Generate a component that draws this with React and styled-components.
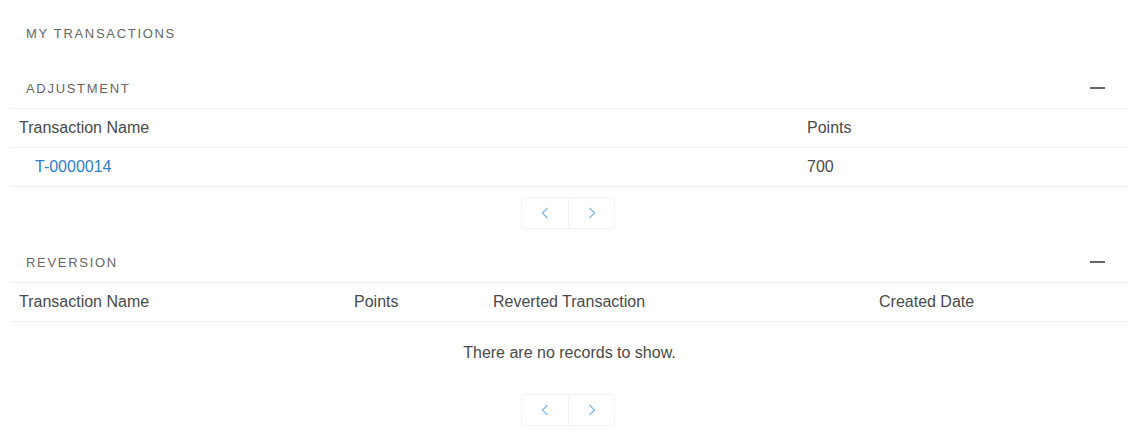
import styled, { createGlobalStyle } from "styled-components";

const GlobalStyle = createGlobalStyle`
  body {
    margin: 0;
    background: #fff;
    font-family: "Liberation Sans", Arial, sans-serif;
    color: #4a4a4a;
  }
`;

const Page = styled.div`
  padding: 0 12px 0 11px;
`;

const PageTitle = styled.div`
  padding: 24px 15px;
  line-height: 20px;
  font-size: 13px;
  letter-spacing: 1.7px;
  text-transform: uppercase;
  color: #666;
`;

const SectionHead = styled.div`
  display: flex;
  align-items: center;
  justify-content: space-between;
  height: 40px;
  padding: 0 23px 0 15px;
  margin-top: ${(p) => p.$gap || 0}px;
  border-bottom: 1px solid #f0f0f0;
`;

const SectionTitle = styled.span`
  font-size: 13px;
  letter-spacing: 1.7px;
  text-transform: uppercase;
  color: #666;
`;

const Collapse = styled.button`
  width: 15px;
  height: 12px;
  padding: 0;
  border: 0;
  background: transparent;
  display: flex;
  align-items: center;
  cursor: pointer;

  &::before {
    content: "";
    display: block;
    width: 15px;
    height: 2px;
    background: #666;
  }
`;

const Row = styled.div`
  display: grid;
  grid-template-columns: ${(p) => p.$cols};
  height: 38px;
  align-items: center;
  border-bottom: 1px solid #f0f0f0;
  font-size: 16px;
`;

const Cell = styled.div`
  padding-left: ${(p) => (p.$indent ? 24 : 8)}px;
  color: #4a4a4a;
  white-space: nowrap;
`;

const Link = styled.a`
  color: #2f80c8;
  text-decoration: none;
  cursor: pointer;
`;

const Empty = styled.div`
  height: 62px;
  display: flex;
  align-items: center;
  justify-content: center;
  font-size: 16px;
  color: #4a4a4a;
`;

const Pager = styled.div`
  display: flex;
  justify-content: center;
  margin-top: 10px;
  padding-right: 3px;
`;

const PagerGroup = styled.div`
  display: flex;
  border: 1px solid #f2f2f2;
  border-radius: 4px;
`;

const PagerBtn = styled.button`
  width: 46px;
  height: 30px;
  border: 0;
  background: transparent;
  display: flex;
  align-items: center;
  justify-content: center;
  padding: 0;
  cursor: pointer;

  & + & {
    border-left: 1px solid #f2f2f2;
  }
`;

const Chevron = ({ dir }) => (
  <svg width="8" height="12" viewBox="0 0 8 12">
    <polyline
      points={dir === "left" ? "6.5,1 1.5,6 6.5,11" : "1.5,1 6.5,6 1.5,11"}
      fill="none"
      stroke="#8dbbe4"
      strokeWidth="1.4"
    />
  </svg>
);

const Pagination = () => (
  <Pager>
    <PagerGroup>
      <PagerBtn aria-label="Previous">
        <Chevron dir="left" />
      </PagerBtn>
      <PagerBtn aria-label="Next">
        <Chevron dir="right" />
      </PagerBtn>
    </PagerGroup>
  </Pager>
);

const adjustmentCols = "788px 1fr";
const reversionCols = "335px 139px 386px 1fr";

export default function App() {
  return (
    <Page>
      <GlobalStyle />
      <PageTitle>My Transactions</PageTitle>

      <SectionHead>
        <SectionTitle>Adjustment</SectionTitle>
        <Collapse aria-label="Collapse" />
      </SectionHead>
      <Row $cols={adjustmentCols}>
        <Cell>Transaction Name</Cell>
        <Cell>Points</Cell>
      </Row>
      <Row $cols={adjustmentCols}>
        <Cell $indent>
          <Link>T-0000014</Link>
        </Cell>
        <Cell>700</Cell>
      </Row>
      <Pagination />

      <SectionHead $gap={13}>
        <SectionTitle>Reversion</SectionTitle>
        <Collapse aria-label="Collapse" />
      </SectionHead>
      <Row $cols={reversionCols}>
        <Cell>Transaction Name</Cell>
        <Cell>Points</Cell>
        <Cell>Reverted Transaction</Cell>
        <Cell>Created Date</Cell>
      </Row>
      <Empty>There are no records to show.</Empty>
      <Pagination />
    </Page>
  );
}
